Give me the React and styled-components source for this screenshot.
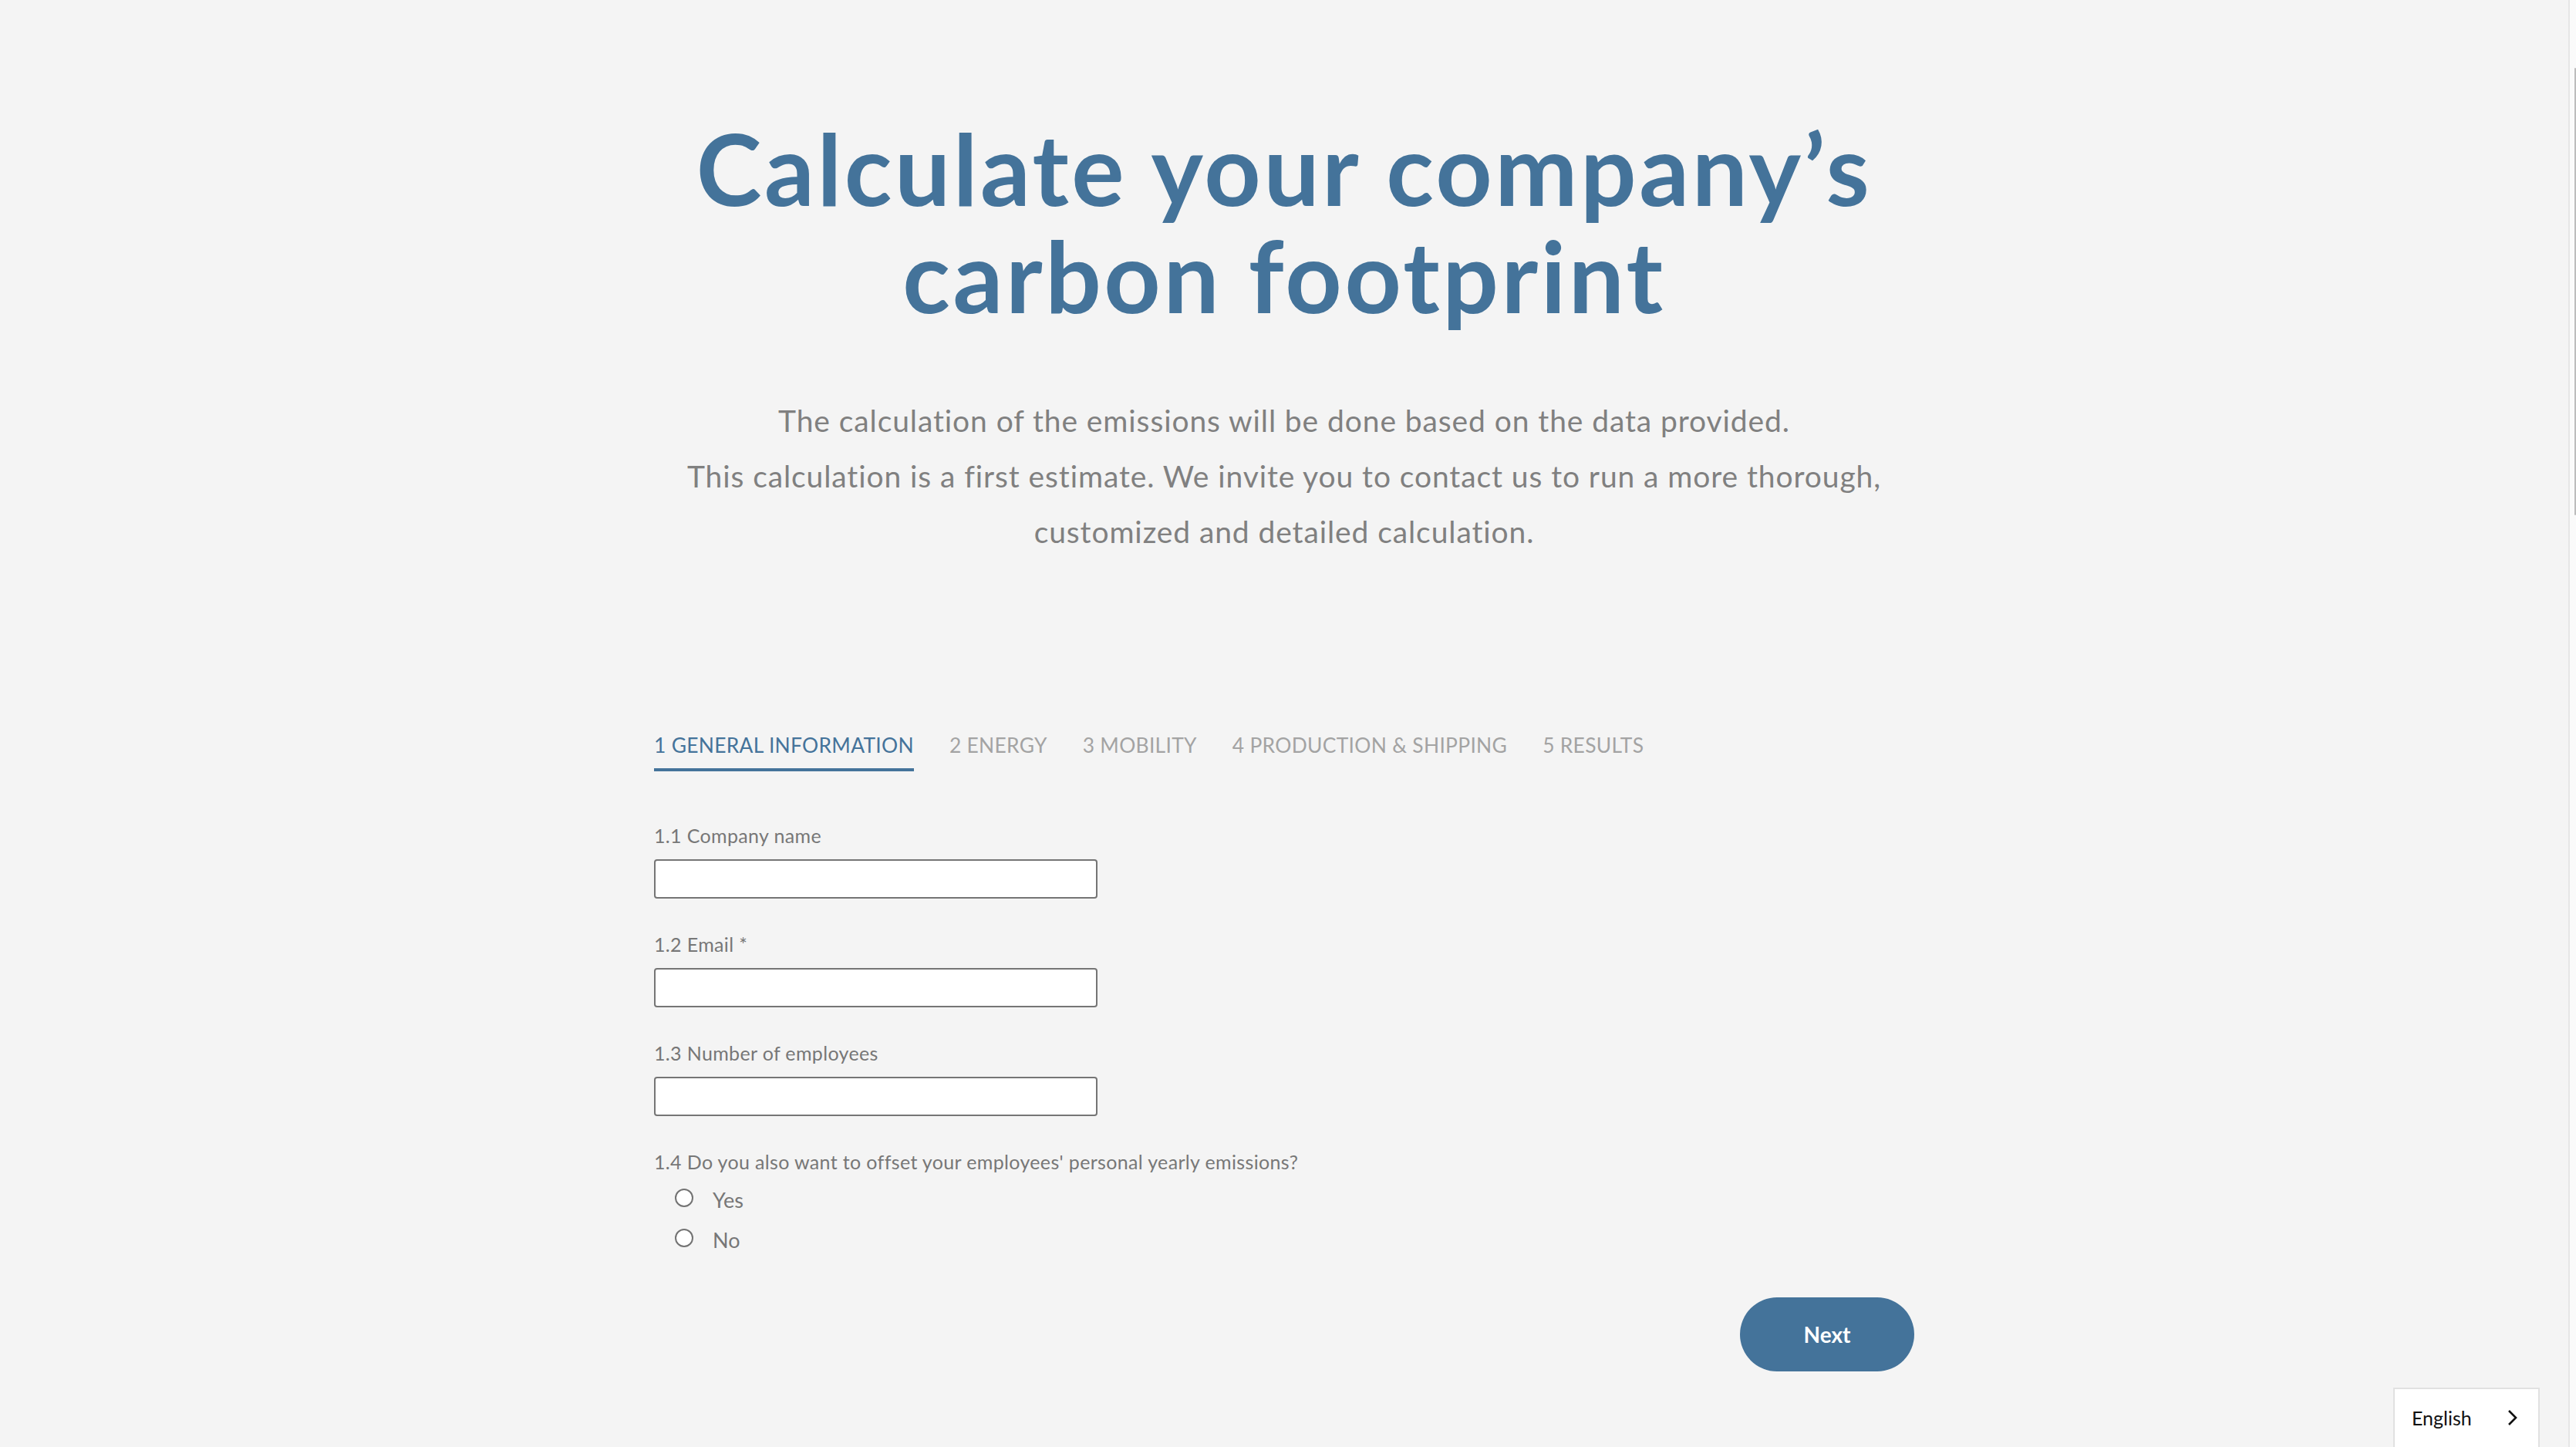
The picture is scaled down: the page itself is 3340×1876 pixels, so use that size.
import React from "react";
import styled, { createGlobalStyle } from "styled-components";

const GlobalStyle = createGlobalStyle`
  html, body {
    margin: 0;
    padding: 0;
    background: #f4f4f4;
    font-family: "Lato", "Noto Sans", sans-serif;
  }
  * {
    box-sizing: border-box;
  }
`;

const Page = styled.main`
  display: flex;
  flex-direction: column;
  align-items: center;
  padding: 148px 10px 120px 0;
  min-height: 1876px;
`;

const Title = styled.h1`
  margin: 0;
  font-size: 128px;
  line-height: 139px;
  font-weight: 700;
  color: #44739a;
  text-align: center;
  letter-spacing: 3.5px;
`;

const Intro = styled.p`
  margin: 83px 0 0;
  font-size: 39px;
  line-height: 72px;
  letter-spacing: 0.9px;
  color: #808080;
  text-align: center;
`;

const Wizard = styled.section`
  width: 1634px;
  margin-top: 221px;
  display: flex;
  flex-direction: column;
`;

const Tabs = styled.nav`
  display: flex;
  gap: 46px;
`;

const Tab = styled.span`
  font-size: 26.4px;
  line-height: 40px;
  letter-spacing: 0.3px;
  padding-bottom: 10px;
  text-transform: uppercase;
  color: ${(p) => (p.$active ? "#44739a" : "#a3a3a3")};
  border-bottom: 4px solid ${(p) => (p.$active ? "#44739a" : "transparent")};
`;

const Form = styled.form`
  display: flex;
  flex-direction: column;
  gap: 44px;
  margin-top: 68px;
`;

const Field = styled.div`
  display: flex;
  flex-direction: column;
  gap: 16px;
`;

const Label = styled.label`
  font-size: 25px;
  line-height: 30px;
  letter-spacing: 0.35px;
  color: #777777;
`;

const Input = styled.input`
  width: 575px;
  height: 51px;
  border: 2px solid #757575;
  border-radius: 4px;
  background: #ffffff;
  font: inherit;
  font-size: 24px;
  padding: 0 12px;
  outline: none;
`;

const RadioGroup = styled.div`
  display: flex;
  flex-direction: column;
  gap: 22px;
  padding-left: 27px;
`;

const Question = styled(Label)`
  margin-left: -27px;
  margin-bottom: -2px;
`;

const Option = styled.label`
  display: flex;
  align-items: center;
  gap: 25px;
  font-size: 27px;
  line-height: 30px;
  color: #777777;
`;

const Dot = styled.span`
  width: 24px;
  height: 24px;
  border-radius: 50%;
  border: 2px solid #737373;
  background: #ffffff;
  margin-top: -6px;
`;

const Actions = styled.div`
  display: flex;
  justify-content: flex-end;
  margin-top: 59px;
`;

const NextButton = styled.button`
  width: 226px;
  height: 96px;
  border: none;
  border-radius: 48px;
  background: #44739a;
  color: #ffffff;
  font-family: "Lato", sans-serif;
  font-size: 28px;
  font-weight: 700;
  cursor: pointer;
`;

const LangSwitch = styled.div`
  position: fixed;
  right: 47px;
  bottom: -4px;
  width: 190px;
  height: 81px;
  background: #ffffff;
  border: 2px solid #e1e1e1;
  display: flex;
  align-items: center;
  justify-content: space-between;
  padding: 0 26px 4px 22px;
  font-size: 25px;
  color: #111111;
`;

const Scrollbar = styled.div`
  position: fixed;
  top: 0;
  right: 0;
  width: 10px;
  height: 100%;
  background: #fafafa;
  border-left: 2px solid #e6e6e6;
`;

const Thumb = styled.div`
  margin: 88px 0 0 6px;
  width: 2px;
  height: 580px;
  border-radius: 1px;
  background: #bcbcbc;
`;

const steps = [
  "1 General information",
  "2 Energy",
  "3 Mobility",
  "4 Production & shipping",
  "5 Results",
];

const fields = [
  { id: "company", label: "1.1 Company name" },
  { id: "email", label: "1.2 Email *" },
  { id: "employees", label: "1.3 Number of employees" },
];

export default function App() {
  return (
    <>
      <GlobalStyle />
      <Page>
        <Title>
          Calculate your company’s
          <br />
          carbon footprint
        </Title>
        <Intro>
          The calculation of the emissions will be done based on the data provided.
          <br />
          This calculation is a first estimate. We invite you to contact us to run a more thorough,
          <br />
          customized and detailed calculation.
        </Intro>
        <Wizard>
          <Tabs>
            {steps.map((s, i) => (
              <Tab key={s} $active={i === 0}>
                {s}
              </Tab>
            ))}
          </Tabs>
          <Form onSubmit={(e) => e.preventDefault()}>
            {fields.map((f) => (
              <Field key={f.id}>
                <Label htmlFor={f.id}>{f.label}</Label>
                <Input id={f.id} type="text" />
              </Field>
            ))}
            <RadioGroup>
              <Question>
                1.4 Do you also want to offset your employees' personal yearly emissions?
              </Question>
              <Option>
                <Dot />
                Yes
              </Option>
              <Option>
                <Dot />
                No
              </Option>
            </RadioGroup>
          </Form>
          <Actions>
            <NextButton type="button">Next</NextButton>
          </Actions>
        </Wizard>
      </Page>
      <LangSwitch>
        English
        <svg width="14" height="22" viewBox="0 0 14 22" fill="none">
          <path d="M2 2l9 9-9 9" stroke="#111" strokeWidth="2.6" />
        </svg>
      </LangSwitch>
      <Scrollbar>
        <Thumb />
      </Scrollbar>
    </>
  );
}
